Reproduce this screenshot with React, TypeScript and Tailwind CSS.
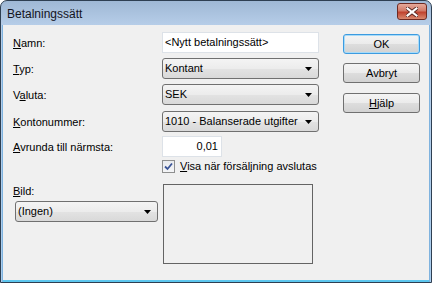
import React from "react";

const Arrow = () => (
  <svg width="7" height="4" viewBox="0 0 7 4" className="shrink-0">
    <polygon points="0,0 7,0 3.5,4" fill="#000" />
  </svg>
);

const Select = ({ text, className = "" }: { text: string; className?: string }) => (
  <div
    className={
      "h-[21px] flex items-center justify-between pl-[2px] pr-[6px] border border-[#707070] rounded-[3px] bg-[linear-gradient(to_bottom,#f4f4f4_0%,#ececec_50%,#e2e2e2_55%,#d9d9d9_100%)] " +
      className
    }
  >
    <span className="leading-[13px]">{text}</span>
    <Arrow />
  </div>
);

const Btn = ({ children, def = false, className = "" }: { children: React.ReactNode; def?: boolean; className?: string }) => (
  <div
    className={
      "w-[77px] h-[20px] flex items-center justify-center rounded-[3px] border bg-[linear-gradient(to_bottom,#f4f4f4_0%,#ebebeb_50%,#dddddd_52%,#d2d2d2_100%)] " +
      (def ? "border-[#3c9be0] shadow-[inset_0_0_0_1px_#a8dbf8] " : "border-[#707070] ") +
      className
    }
  >
    <span className="leading-[13px]">{children}</span>
  </div>
);

const Label = ({ u, rest }: { u: React.ReactNode; rest: string }) => (
  <div className="w-[149px] leading-[13px] pt-[1px]">
    {u}
    {rest}
  </div>
);

export default function App() {
  return (
    <div className="w-[432px] h-[283px] font-['Liberation_Sans',Arial,sans-serif] text-[11px] text-black">
      <div className="w-full h-full flex flex-col border border-[#2e3f52] rounded-t-[7px] overflow-hidden bg-[linear-gradient(to_bottom,#9fb8d5_0px,#b6cde8_24px,#a9cdee_100%)]">
        {/* title bar */}
        <div className="h-[24px] shrink-0 flex items-center pl-[6px] pr-[4px] pt-[1px]">
          <span className="text-[12px] leading-[14px] text-[#14141e]">Betalningssätt</span>
          <div className="flex-1" />
          <div className="w-[30px] h-[17px] -mt-[4px] rounded-[3px] border border-[#6e2a22] bg-[linear-gradient(to_bottom,#e6aa9c_0%,#d27a68_45%,#c0432f_55%,#d88a70_100%)] flex items-center justify-center">
            <svg width="12" height="10" viewBox="0 0 12 10">
              <path d="M1.5 1.5 L10.5 8.5 M10.5 1.5 L1.5 8.5" stroke="#5a2a24" strokeWidth="4" strokeLinecap="square" />
              <path d="M1.5 1.5 L10.5 8.5 M10.5 1.5 L1.5 8.5" stroke="#ffffff" strokeWidth="2.2" strokeLinecap="square" />
            </svg>
          </div>
        </div>
        {/* client area */}
        <div className="flex-1 mx-[1px] border-x border-[#7fb3df] flex flex-col">
          <div className="flex-1 bg-[#f0f0f0] flex">
            {/* form */}
            <div className="w-[316px] pl-[10px] pt-[7px] flex flex-col">
              <div className="h-[21px] flex items-center">
                <Label u={<u>N</u>} rest="amn:" />
                <div className="w-[157px] h-[21px] bg-white border border-[#dde2e8] flex items-center pl-[2px] leading-[13px]">
                  &lt;Nytt betalningssätt&gt;
                </div>
              </div>
              <div className="h-[21px] mt-[5px] flex items-center">
                <Label u={<u>T</u>} rest="yp:" />
                <Select text="Kontant" className="w-[157px]" />
              </div>
              <div className="h-[21px] mt-[5px] flex items-center">
                <Label u={<>V<u>a</u></>} rest="luta:" />
                <Select text="SEK" className="w-[157px]" />
              </div>
              <div className="h-[21px] mt-[6px] flex items-center">
                <Label u={<u>K</u>} rest="ontonummer:" />
                <Select text="1010 - Balanserade utgifter" className="w-[157px]" />
              </div>
              <div className="h-[21px] mt-[4px] flex items-center">
                <Label u={<u>A</u>} rest="vrunda till närmsta:" />
                <div className="w-[60px] h-[21px] bg-white border border-[#dde2e8] flex items-center justify-end pr-[3px] leading-[13px]">
                  0,01
                </div>
              </div>
              <div className="h-[13px] mt-[3px] flex items-center pl-[149px]">
                <div className="w-[13px] h-[13px] border border-[#8e8f8f] bg-[linear-gradient(to_bottom,#e9ebee,#f4f5f7)] flex items-center justify-center">
                  <svg width="9" height="9" viewBox="0 0 9 9">
                    <path d="M1 4.5 L3.5 7 L8 1.5" stroke="#3b5597" strokeWidth="1.8" fill="none" />
                  </svg>
                </div>
                <span className="ml-[5px] leading-[13px]">
                  <u>V</u>isa när försäljning avslutas
                </span>
              </div>
              <div className="mt-[11px] flex">
                <div className="w-[150px] flex flex-col">
                  <div className="mt-[1px] leading-[13px]">
                    <u>B</u>ild:
                  </div>
                  <Select text="(Ingen)" className="w-[143px] ml-[2px] mt-[3px]" />
                </div>
                <div className="w-[150px] h-[80px] border border-[#646464]" />
              </div>
            </div>
            {/* buttons */}
            <div className="ml-[24px] pt-[9px] flex flex-col">
              <Btn def>OK</Btn>
              <Btn className="mt-[9px]">Avbryt</Btn>
              <Btn className="mt-[10px]">
                <u>H</u>jälp
              </Btn>
            </div>
          </div>
          <div className="h-[2px] bg-[#5cc6ee]" />
        </div>
      </div>
    </div>
  );
}
